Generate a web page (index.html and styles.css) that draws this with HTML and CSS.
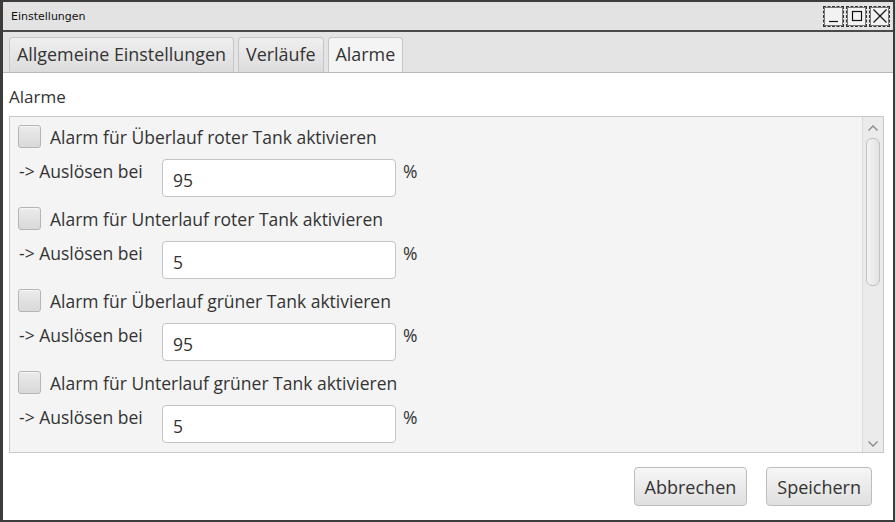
FILE: index.html
```html
<!DOCTYPE html>
<html lang="de">
<head>
<meta charset="utf-8">
<title>Einstellungen</title>
<link rel="stylesheet" href="styles.css">
</head>
<body>
<div class="window">
  <div class="titlebar">
    <span class="title">Einstellungen</span>
    <div class="winbtns">
      <span class="wbtn"><svg width="18" height="18" viewBox="0 0 18 18"><path d="M4 14.5h9" stroke="#111" stroke-width="1.2"/></svg></span>
      <span class="wbtn"><svg width="18" height="18" viewBox="0 0 18 18"><rect x="4.5" y="4.5" width="9" height="9" fill="none" stroke="#111" stroke-width="1.2"/></svg></span>
      <span class="wbtn"><svg width="18" height="18" viewBox="0 0 18 18"><path d="M2.5 2.5l13 13M15.5 2.5l-13 13" stroke="#111" stroke-width="1.2"/></svg></span>
    </div>
  </div>
  <div class="body">
    <div class="tabbar">
      <div class="tab">Allgemeine Einstellungen</div>
      <div class="tab">Verläufe</div>
      <div class="tab active">Alarme</div>
    </div>
    <div class="content">
      <div class="section-label">Alarme</div>
      <div class="scrollpane">
        <div class="list">
          <div class="check-row"><span class="checkbox"></span><span>Alarm für Überlauf roter Tank aktivieren</span></div>
          <div class="field-row"><span class="flabel">-&gt; Auslösen bei</span><span class="textfield">95</span><span class="unit">%</span></div>
          <div class="check-row"><span class="checkbox"></span><span>Alarm für Unterlauf roter Tank aktivieren</span></div>
          <div class="field-row"><span class="flabel">-&gt; Auslösen bei</span><span class="textfield">5</span><span class="unit">%</span></div>
          <div class="check-row"><span class="checkbox"></span><span>Alarm für Überlauf grüner Tank aktivieren</span></div>
          <div class="field-row"><span class="flabel">-&gt; Auslösen bei</span><span class="textfield">95</span><span class="unit">%</span></div>
          <div class="check-row"><span class="checkbox"></span><span>Alarm für Unterlauf grüner Tank aktivieren</span></div>
          <div class="field-row"><span class="flabel">-&gt; Auslösen bei</span><span class="textfield">5</span><span class="unit">%</span></div>
        </div>
        <div class="vscroll">
          <svg class="arrow" width="12" height="8" viewBox="0 0 12 8"><path d="M1.5 6.5L6 2l4.5 4.5" fill="none" stroke="#8a8a8a" stroke-width="1.4"/></svg>
          <div class="track"><div class="thumb"></div></div>
          <svg class="arrow" width="12" height="8" viewBox="0 0 12 8"><path d="M1.5 1.5L6 6l4.5-4.5" fill="none" stroke="#8a8a8a" stroke-width="1.4"/></svg>
        </div>
      </div>
      <div class="buttons">
        <button class="btn">Abbrechen</button>
        <button class="btn">Speichern</button>
      </div>
    </div>
  </div>
</div>
</body>
</html>
```

FILE: styles.css
```css
* { box-sizing: border-box; }
html, body { margin: 0; padding: 0; background: #ffffff; }
body {
  width: 895px;
  height: 522px;
  overflow: hidden;
  font-family: "Open Sans", "Noto Sans", sans-serif;
  color: #333333;
}
.window {
  width: 895px;
  height: 522px;
  border: 2px solid #3c3c3c;
  border-left-width: 3px;
  display: flex;
  flex-direction: column;
  background: #fff;
}
.titlebar {
  height: 30px;
  flex: none;
  background: #e3e3e3;
  border-bottom: 2px solid #4a4a4a;
  display: flex;
  align-items: center;
  justify-content: space-between;
  padding: 0 3px 0 8px;
}
.title { font-size: 11px; color: #111; font-family: "DejaVu Sans", sans-serif; }
.winbtns { display: flex; gap: 2px; }
.wbtn {
  width: 21px;
  height: 21px;
  border: 1px dashed #333;
  outline: 1px solid #777;
  outline-offset: -2px;
  background: #f2f2f2;
  display: flex;
  align-items: center;
  justify-content: center;
}
.body { flex: 1; display: flex; flex-direction: column; }
.tabbar {
  height: 41px;
  flex: none;
  background: #e4e4e4;
  border-bottom: 1px solid #b8b8b8;
  display: flex;
  align-items: flex-end;
  gap: 4px;
  padding: 0 0 0 6px;
}
.tab {
  height: 35px;
  padding: 0 7px 2px;
  border: 1px solid #c6c6c6;
  border-bottom: none;
  border-radius: 4px 4px 0 0;
  background: linear-gradient(#efefef, #dcdcdc);
  font-size: 17.9px;
  display: flex;
  align-items: center;
}
.tab.active { background: #f4f4f4; }
.content {
  flex: 1;
  display: flex;
  flex-direction: column;
  padding: 12px 9px 0 6px;
}
.section-label { font-size: 17px; height: 24px; line-height: 24px; margin-bottom: 7px; }
.scrollpane {
  height: 337px;
  flex: none;
  border: 1px solid #c8c8c8;
  background: #f4f4f4;
  display: flex;
}
.list { flex: 1; padding: 2px 0 0 8px; }
.check-row {
  height: 33px;
  display: flex;
  align-items: center;
  gap: 9px;
  font-size: 17.5px;
  padding-top: 2px;
}
.checkbox {
  flex: none;
  width: 23px;
  height: 23px;
  border: 1px solid #b5b5b5;
  border-radius: 3px;
  background: linear-gradient(#ebebeb, #d9d9d9);
  box-shadow: inset 0 1px 0 #f6f6f6;
}
.field-row {
  height: 49px;
  display: flex;
  align-items: flex-start;
  font-size: 17.5px;
  padding-top: 7px;
}
.flabel { width: 144px; padding-left: 1px; line-height: 22px; padding-top: 1px; }
.textfield {
  width: 234px;
  height: 38px;
  border: 1px solid #c4c4c4;
  border-radius: 4px;
  background: #fff;
  padding: 9px 0 0 10px;
  line-height: 22px;
}
.unit { margin-left: 7px; line-height: 22px; padding-top: 1px; }
.vscroll {
  width: 21px;
  border-left: 1px solid #dadada;
  background: #ebebeb;
  display: flex;
  flex-direction: column;
  align-items: center;
  padding: 7px 0 4px;
}
.arrow { flex: none; }
.track { flex: 1; width: 100%; padding: 6px 3px; }
.thumb {
  height: 148px;
  border: 1px solid #c2c2c2;
  border-radius: 6px;
  background: linear-gradient(90deg, #f4f4f4, #e2e2e2);
}
.buttons {
  display: flex;
  justify-content: flex-end;
  gap: 19px;
  padding: 14px 12px 0 0;
}
.btn {
  height: 39px;
  padding: 0 10px;
  font-family: inherit;
  font-size: 18px;
  color: #333;
  border: 1px solid #bdbdbd;
  border-radius: 4px;
  background: linear-gradient(#f6f6f6, #dfdfdf);
}
```
